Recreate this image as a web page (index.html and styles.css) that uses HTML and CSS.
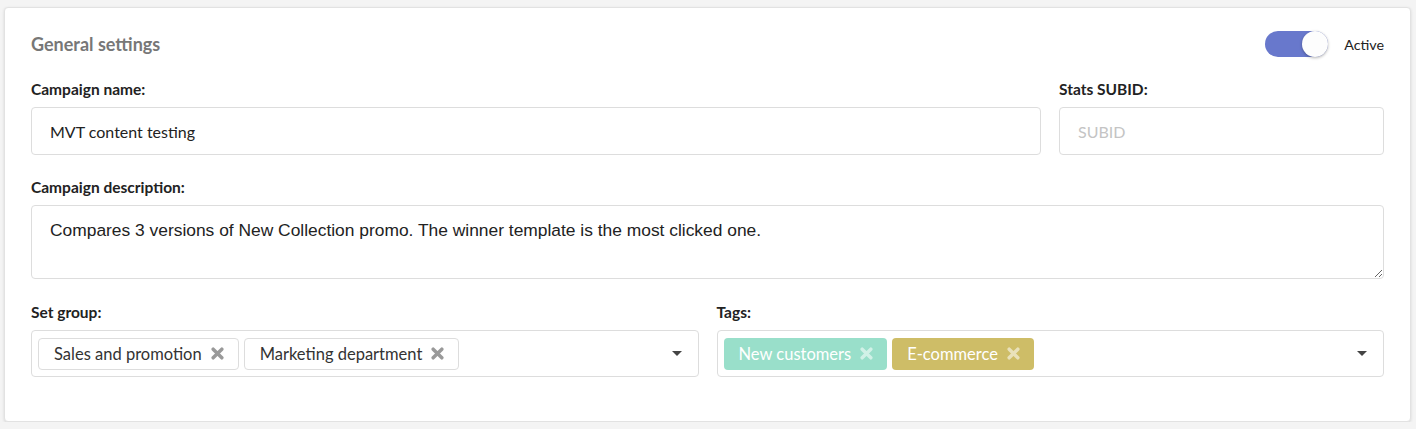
FILE: index.html
```html
<!DOCTYPE html>
<html>
<head>
<meta charset="utf-8">
<link rel="stylesheet" href="styles.css">
</head>
<body>
<div class="card">
  <div class="header">
    <h2 class="title">General settings</h2>
    <div class="toggle-wrap">
      <span class="toggle"><span class="knob"></span></span>
      <span class="toggle-label">Active</span>
    </div>
  </div>
  <div class="row">
    <div class="field grow">
      <label class="label">Campaign name:</label>
      <div class="input">MVT content testing</div>
    </div>
    <div class="field subid">
      <label class="label">Stats SUBID:</label>
      <div class="input placeholder">SUBID</div>
    </div>
  </div>
  <div class="row">
    <div class="field grow">
      <label class="label">Campaign description:</label>
      <textarea class="textarea">Compares 3 versions of New Collection promo. The winner template is the most clicked one.</textarea>
    </div>
  </div>
  <div class="row last">
    <div class="field half">
      <label class="label">Set group:</label>
      <div class="select">
        <div class="chips">
          <span class="chip">Sales and promotion<svg class="x" viewBox="0 0 12 12"><path d="M2 2L10 10M10 2L2 10"/></svg></span>
          <span class="chip">Marketing department<svg class="x" viewBox="0 0 12 12"><path d="M2 2L10 10M10 2L2 10"/></svg></span>
        </div>
        <span class="caret"></span>
      </div>
    </div>
    <div class="field half">
      <label class="label">Tags:</label>
      <div class="select">
        <div class="chips">
          <span class="chip tag green">New customers<svg class="x" viewBox="0 0 12 12"><path d="M2 2L10 10M10 2L2 10"/></svg></span>
          <span class="chip tag gold">E-commerce<svg class="x" viewBox="0 0 12 12"><path d="M2 2L10 10M10 2L2 10"/></svg></span>
        </div>
        <span class="caret"></span>
      </div>
    </div>
  </div>
</div>
</body>
</html>
```
FILE: styles.css
```css
* { box-sizing: border-box; }
html, body { margin: 0; padding: 0; }
body {
  background: #f4f4f4;
  font-family: "Lato", "Liberation Sans", sans-serif;
  color: #222;
  padding: 7px 5px 0 4px;
}
.card {
  background: #fff;
  border: 1px solid #e2e2e2;
  border-radius: 4px;
  box-shadow: 0 1px 3px rgba(0,0,0,0.12);
  padding: 23px 26px 43px 26px;
  height: 415px;
}
.header {
  display: flex;
  align-items: center;
  justify-content: space-between;
  height: 26px;
}
.title {
  margin: 0;
  font-size: 18px;
  font-weight: 700;
  color: #777;
}
.toggle-wrap { display: flex; align-items: center; gap: 16px; }
.toggle {
  position: relative;
  width: 63px;
  height: 26px;
  border-radius: 13px;
  background: #6878cc;
  display: block;
}
.knob {
  position: absolute;
  right: 0;
  top: 0;
  width: 26px;
  height: 26px;
  border-radius: 50%;
  background: #fdfdfd;
  box-shadow: 0 1px 3px rgba(0,0,0,0.3);
}
.toggle-label { font-size: 14.3px; color: #222; }
.row {
  display: flex;
  gap: 18px;
  margin-top: 23px;
}
.row.last { margin-top: 24px; }
.field { display: flex; flex-direction: column; }
.grow { flex: 1; }
.subid { width: 325px; }
.half { flex: 1; }
.label {
  font-size: 15.5px;
  font-weight: 700;
  color: #222;
  line-height: 18px;
  margin-bottom: 9px;
}
.input {
  height: 48px;
  border: 1px solid #ddd;
  border-radius: 4px;
  padding: 0 18px;
  display: flex;
  align-items: center;
  font-size: 16px;
  color: #222;
}
.placeholder { color: #c4c4c4; }
.textarea {
  height: 74px;
  border: 1px solid #ddd;
  border-radius: 4px;
  padding: 14px 18px;
  font-family: "Liberation Sans", Arial, sans-serif;
  font-size: 17.4px;
  color: #222;
  resize: vertical;
  outline: none;
  width: 100%;
  display: block;
}
.select {
  height: 47px;
  border: 1px solid #ddd;
  border-radius: 4px;
  display: flex;
  align-items: center;
  justify-content: space-between;
  padding: 0 16px 0 6px;
}
.chips { display: flex; gap: 5px; }
.chip {
  height: 32px;
  border: 1px solid #ddd;
  border-radius: 4px;
  padding: 0 14px 0 15px;
  display: flex;
  align-items: center;
  font-size: 16.5px;
  color: #333;
  white-space: nowrap;
}
.chip .x {
  width: 13px;
  height: 13px;
  margin-left: 9px;
  fill: none;
  stroke: #999;
  stroke-width: 3.2;
  stroke-linecap: round;
}
.tag { border: none; color: #fff; }
.tag .x { stroke: rgba(255,255,255,0.55); }
.green { background: #99dfca; }
.gold { background: #cebd67; }
.caret {
  width: 0; height: 0;
  border-left: 5px solid transparent;
  border-right: 5px solid transparent;
  border-top: 5px solid #444;
}
```
